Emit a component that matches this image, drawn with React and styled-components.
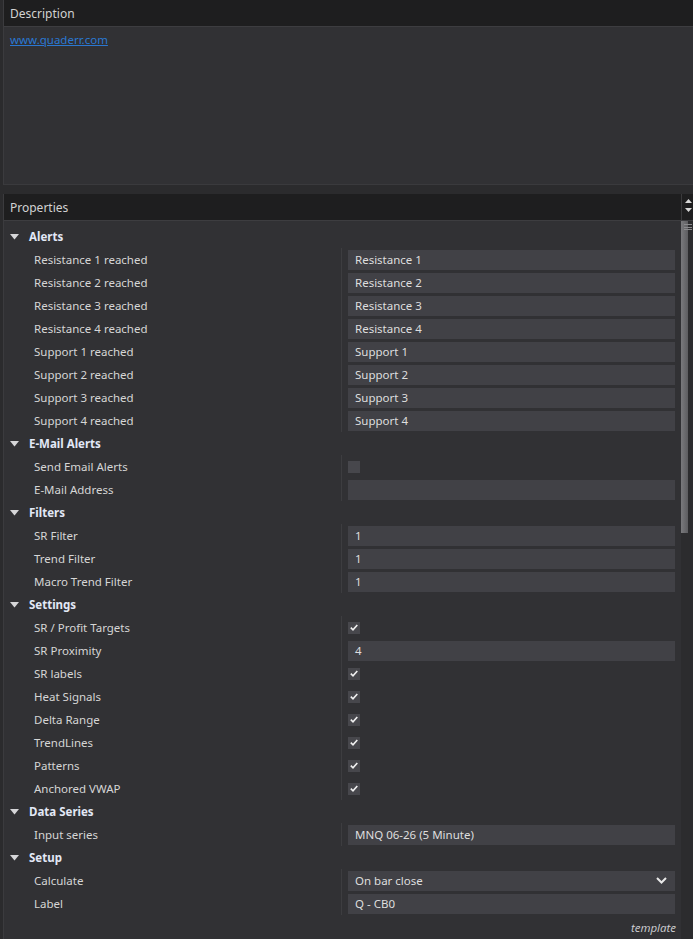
import styled, { createGlobalStyle } from "styled-components";

const GlobalStyle = createGlobalStyle`
  html, body {
    margin: 0;
    padding: 0;
    background: #2b2b2d;
    height: 939px;
    overflow: hidden;
  }
  * { box-sizing: border-box; }
`;

const Page = styled.div`
  height: 939px;
  display: flex;
  flex-direction: column;
  padding-left: 3px;
  font-family: "Noto Sans", "Open Sans", sans-serif;
  font-size: 11.5px;
  color: #d6d6d6;
`;

const Section = styled.section`
  display: flex;
  flex-direction: column;
  border-left: 1px solid #3b3b3e;
  flex: ${props => props.grow ? "1" : "none"};
  min-height: 0;
`;

const Header = styled.div`
  height: 27px;
  background: #1e1e1f;
  border-bottom: 1px solid #3d3d40;
  display: flex;
  align-items: center;
  padding-left: 6px;
  color: #d2d2d2;
  font-size: 12px;
`;

const HeaderTitle = styled.span`
  flex: 1;
`;

const HeaderArrows = styled.div`
  width: 12px;
  align-self: stretch;
  border-left: 1px solid #3a3a3c;
  display: flex;
  flex-direction: column;
  align-items: center;
  justify-content: space-between;
  padding: 5px 0 8px 1px;
`;

const DescBody = styled.div`
  height: 158px;
  background: #313134;
  border-bottom: 1px solid #3a3a3d;
  padding: 5px 6px;
`;

const Link = styled.a`
  color: #2a78d2;
  text-decoration: underline;
`;

const Gap = styled.div`
  height: 9px;
`;

const PropBody = styled.div`
  flex: 1;
  display: flex;
  background: #313134;
  min-height: 0;
`;

const List = styled.div`
  flex: 1;
  padding-top: 4px;
  display: flex;
  flex-direction: column;
`;

const GroupRow = styled.div`
  height: 23px;
  display: flex;
  align-items: center;
  padding-left: 6px;
  gap: 10px;
  font-weight: 700;
  color: #e2e8f6;
`;

const Row = styled.div`
  height: 23px;
  display: grid;
  grid-template-columns: 337px 1px 1fr;
  align-items: center;
`;

const Label = styled.span`
  padding-left: 30px;
  color: #d6d6d6;
`;

const Divider = styled.div`
  align-self: stretch;
  background: #3d3d40;
`;

const Field = styled.div`
  margin: 0 6px;
  height: 20px;
  background: #414146;
  display: flex;
  align-items: center;
  justify-content: space-between;
  padding: 0 8px 0 7px;
  color: #dedede;
`;

const Check = styled.div`
  margin-left: 6px;
  width: 12px;
  height: 12px;
  background: #47474c;
  display: flex;
  align-items: center;
  justify-content: center;
`;

const Footer = styled.div`
  margin-top: auto;
  height: 23px;
  display: flex;
  align-items: center;
  justify-content: flex-end;
  padding-right: 5px;
  font-style: italic;
  font-size: 11.5px;
  color: #cfcfd2;
  font-family: "Open Sans", sans-serif;
`;

const Track = styled.div`
  width: 12px;
  background: #2c2c2e;
  position: relative;
`;

const Thumb = styled.div`
  width: 7px;
  height: 312px;
  background: linear-gradient(90deg, #7a7a7d, #5d5d60);
`;

const Grip = styled.div`
  position: absolute;
  top: 3px;
  left: 3px;
  width: 8px;
  height: 6px;
  border-top: 1px solid #8a8a8d;
  border-bottom: 1px solid #8a8a8d;
  &::after {
    content: "";
    display: block;
    margin-top: 1.5px;
    height: 1px;
    background: #8a8a8d;
  }
`;

const Triangle = () => (
  <svg width="9" height="6" viewBox="0 0 9 6">
    <path d="M0 0 L9 0 L4.5 5.5 Z" fill="#d6d6d8" />
  </svg>
);

const ArrowUp = () => (
  <svg width="7" height="4" viewBox="0 0 7 4">
    <path d="M0 4 L7 4 L3.5 0 Z" fill="#d8d8d8" />
  </svg>
);

const ArrowDown = () => (
  <svg width="7" height="4" viewBox="0 0 7 4">
    <path d="M0 0 L7 0 L3.5 4 Z" fill="#d8d8d8" />
  </svg>
);

const Tick = () => (
  <svg width="8" height="7" viewBox="0 0 8 7">
    <path d="M0.8 3.6 L3 5.8 L7.3 1" stroke="#f0f0f0" strokeWidth="1.6" fill="none" />
  </svg>
);

const Chevron = () => (
  <svg width="11" height="7" viewBox="0 0 11 7">
    <path d="M1 1 L5.5 5.5 L10 1" stroke="#e8e8e8" strokeWidth="2" fill="none" />
  </svg>
);

const groups = [
  {
    name: "Alerts",
    rows: [
      ["Resistance 1 reached", "text", "Resistance 1"],
      ["Resistance 2 reached", "text", "Resistance 2"],
      ["Resistance 3 reached", "text", "Resistance 3"],
      ["Resistance 4 reached", "text", "Resistance 4"],
      ["Support 1 reached", "text", "Support 1"],
      ["Support 2 reached", "text", "Support 2"],
      ["Support 3 reached", "text", "Support 3"],
      ["Support 4 reached", "text", "Support 4"],
    ],
  },
  {
    name: "E-Mail Alerts",
    rows: [
      ["Send Email Alerts", "check", false],
      ["E-Mail Address", "text", ""],
    ],
  },
  {
    name: "Filters",
    rows: [
      ["SR Filter", "text", "1"],
      ["Trend Filter", "text", "1"],
      ["Macro Trend Filter", "text", "1"],
    ],
  },
  {
    name: "Settings",
    rows: [
      ["SR / Profit Targets", "check", true],
      ["SR Proximity", "text", "4"],
      ["SR labels", "check", true],
      ["Heat Signals", "check", true],
      ["Delta Range", "check", true],
      ["TrendLines", "check", true],
      ["Patterns", "check", true],
      ["Anchored VWAP", "check", true],
    ],
  },
  {
    name: "Data Series",
    rows: [["Input series", "text", "MNQ 06-26 (5 Minute)"]],
  },
  {
    name: "Setup",
    rows: [
      ["Calculate", "select", "On bar close"],
      ["Label", "text", "Q - CB0"],
    ],
  },
];

const Value = ({ kind, value }) => {
  if (kind === "check") {
    return <Check>{value && <Tick />}</Check>;
  }
  return (
    <Field>
      <span>{value}</span>
      {kind === "select" && <Chevron />}
    </Field>
  );
};

export default function App() {
  return (
    <>
      <GlobalStyle />
      <Page>
        <Section>
          <Header>
            <HeaderTitle>Description</HeaderTitle>
          </Header>
          <DescBody>
            <Link href="#">www.quaderr.com</Link>
          </DescBody>
        </Section>
        <Gap />
        <Section grow>
          <Header>
            <HeaderTitle>Properties</HeaderTitle>
            <HeaderArrows>
              <ArrowUp />
              <ArrowDown />
            </HeaderArrows>
          </Header>
          <PropBody>
            <List>
              {groups.map(g => (
                <div key={g.name}>
                  <GroupRow>
                    <Triangle />
                    <span>{g.name}</span>
                  </GroupRow>
                  {g.rows.map(([label, kind, value]) => (
                    <Row key={label}>
                      <Label>{label}</Label>
                      <Divider />
                      <Value kind={kind} value={value} />
                    </Row>
                  ))}
                </div>
              ))}
              <Footer>template</Footer>
            </List>
            <Track>
              <Thumb />
              <Grip />
            </Track>
          </PropBody>
        </Section>
      </Page>
    </>
  );
}
